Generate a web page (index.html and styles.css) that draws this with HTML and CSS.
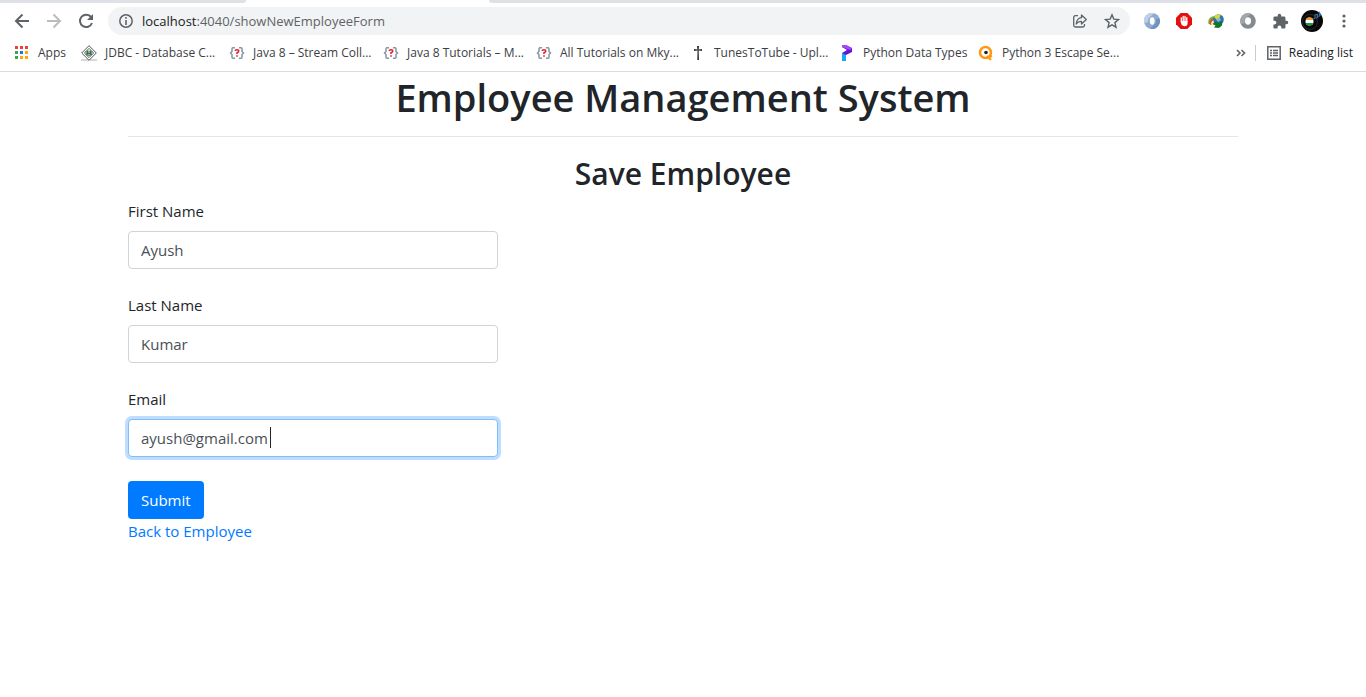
FILE: index.html
```html
<!DOCTYPE html>
<html lang="en">
<head>
<meta charset="utf-8">
<title>Employee Management System</title>
<link rel="stylesheet" href="styles.css">
</head>
<body>
<svg class="defs" aria-hidden="true">
  <defs>
    <symbol id="mkyong" viewBox="0 0 16 14">
      <path d="M6 1.700H4Q3 1.700 3 2.700V5.500L1.500 7 3 8.500v2.800q0 1 1 1H6M10 1.700h2q1 0 1 1V5.500L14.500 7 13 8.500v2.800q0 1-1 1h-2" fill="none" stroke="#8595a3" stroke-width="1.500"/>
      <path d="M6.200 5Q6.200 3.700 8 3.700T9.800 5Q9.800 6.300 8 6.800V8M8 9.200v1.600" fill="none" stroke="#e8202c" stroke-width="1.600"/>
    </symbol>
  </defs>
</svg>
<header class="browser">
  <div class="tabstrip"><span class="tabs-before"></span><span class="tabs-after"></span></div>
  <div class="toolbar">
    <nav class="nav-buttons">
      <button class="icon-button" aria-label="Back"><svg width="16" height="16" viewBox="0 0 16 16" fill="none" stroke="#5f6368" stroke-width="2"><path d="M15 8H2M8.500 1.500 2 8l6.500 6.500"/></svg></button>
      <button class="icon-button" aria-label="Forward"><svg width="16" height="16" viewBox="0 0 16 16" fill="none" stroke="#babcbe" stroke-width="2"><path d="M1 8h13M7.500 1.500 14 8l-6.500 6.500"/></svg></button>
      <button class="icon-button" aria-label="Reload"><svg width="16" height="16" viewBox="0 0 16 16"><path d="M13.200 4.200A6.200 6.200 0 1 0 14 10" fill="none" stroke="#5f6368" stroke-width="2"/><path d="M15 1v6H9z" fill="#5f6368"/></svg></button>
    </nav>
    <div class="address">
      <svg width="14" height="14" viewBox="0 0 14 14"><circle cx="7" cy="7" r="6.200" fill="none" stroke="#5f6368" stroke-width="1.500"/><path d="M7 3v1.700M7 6v5" stroke="#5f6368" stroke-width="1.600"/></svg>
      <span class="url"><span class="host">localhost</span>:4040/showNewEmployeeForm</span>
      <button class="icon-button" aria-label="Share"><svg width="16" height="16" viewBox="0 0 16 16" fill="none" stroke="#5f6368" stroke-width="1.300"><path d="M6 2.700H3.500q-1.800 0-1.800 1.800v7.700q0 1.800 1.800 1.800h7.200q1.800 0 1.800-1.800V11"/><path d="M9.500 2v2.700Q5 5 4.200 11 6 8.300 9.500 8.300V11l4.800-4.500z" stroke-linejoin="round"/></svg></button>
      <button class="icon-button" aria-label="Bookmark this page"><svg width="16" height="16" viewBox="0 0 16 16" fill="none" stroke="#5f6368" stroke-width="1.400"><path d="m8 1.800 1.800 4.300 4.700.4-3.600 3.100 1.100 4.600L8 11.800l-4 2.400 1.100-4.600-3.600-3.100 4.700-.4z"/></svg></button>
    </div>
    <div class="extensions">
      <button class="icon-button" aria-label="Blue ring extension"><svg width="16" height="16" viewBox="0 0 16 16"><circle cx="8" cy="8" r="8" fill="#8facd0"/><path d="M2 2.500A8 8 0 0 1 10 .3L6 4A5 5 0 0 0 4 9L.3 10A8 8 0 0 1 2 2.500" fill="#bdd0e5"/><path d="M15.500 5.500A8 8 0 0 1 6 15.800L10 12q3-2 2-6z" fill="#6d94bf"/><ellipse cx="8.200" cy="8" rx="2.400" ry="3.700" fill="#fff"/></svg></button>
      <button class="icon-button" aria-label="Ad blocker"><svg width="16" height="16" viewBox="0 0 16 16"><path d="M4.700 0h6.600L16 4.700v6.600L11.300 16H4.700L0 11.300V4.700z" fill="#e60f0f"/><path d="M5.300 9V5M7.200 8V3.500M9 8V3.500M10.800 9V4.700" stroke="#fff" stroke-width="1.300" stroke-linecap="round"/><path d="M4.700 8h6.800v2.500q0 2.800-2.700 2.800-2.500 0-3.500-2z" fill="#fff"/></svg></button>
      <button class="icon-button" aria-label="Download manager"><svg width="16" height="16" viewBox="0 0 16 16"><path d="M.3 10.500Q-.5 3.500 7 3l1 6-5 3z" fill="#68b83f"/><path d="M1.500 11Q1 5 7.500 5l1 4-5 3z" fill="#e9482c"/><path d="M3 11.500Q3 7 8 6.700l1 3-4 2.500z" fill="#fff0a0"/><circle cx="10.500" cy="6.500" r="5.300" fill="#2c72b5"/><path d="M6 4Q7.500 1 10.500 1.200l2 .8-1 3-3 1.500z" fill="#d9d92d"/><path d="m8 6 4-1 1 2-3 2z" fill="#82bbe0"/><path d="m14.500 8-.5 4.500-3 2.500-5-.5 1.500-2-3-1.500 3-2.500 3 1z" fill="#12762b"/></svg></button>
      <button class="icon-button" aria-label="Grey ring extension"><svg width="16" height="16" viewBox="0 0 16 16"><circle cx="8" cy="8" r="7.800" fill="#858990"/><path d="M2 3A8 8 0 0 1 11 .8L7 4Q4 6 5 10L1 11A8 8 0 0 1 2 3" fill="#a2a5ab"/><ellipse cx="8" cy="8" rx="3" ry="3.700" fill="#fff"/></svg></button>
      <button class="icon-button" aria-label="Extensions"><svg width="17" height="17" viewBox="0 0 24 24"><path d="M20.500 11H19V7c0-1.100-.9-2-2-2h-4V3.500a2.500 2.500 0 0 0-5 0V5H4c-1.100 0-2 .9-2 2v3.800h1.500c1.500 0 2.700 1.200 2.700 2.700S5 16.200 3.500 16.200H2V20c0 1.100.9 2 2 2h3.800v-1.500c0-1.500 1.200-2.700 2.700-2.700s2.700 1.200 2.700 2.700V22H17c1.100 0 2-.9 2-2v-4h1.500a2.500 2.500 0 0 0 0-5z" fill="#5f6368"/></svg></button>
      <button class="icon-button" aria-label="Profile"><svg width="22" height="22" viewBox="0 0 22 22"><circle cx="11" cy="11" r="11" fill="#080808"/><circle cx="9" cy="12" r="7.500" fill="none" stroke="#282828"/><circle cx="8.500" cy="11.500" r="4" fill="#fff"/><path d="M4.700 10a4 4 0 0 1 7.600 0z" fill="#f39432"/><path d="M4.700 13a4 4 0 0 0 7.600 0z" fill="#169647"/><path d="M14 8.500V5l2.500-.7V8M18.500 6V3l2 3M12.500 8.500H14M15 8h1.500M17.300 6.300h1.200" fill="none" stroke="#366f9f" stroke-width="1.200"/></svg></button>
      <button class="icon-button" aria-label="Menu"><svg width="16" height="16" viewBox="0 0 16 16" fill="#5f6368"><circle cx="8" cy="3" r="1.600"/><circle cx="8" cy="8" r="1.600"/><circle cx="8" cy="13" r="1.600"/></svg></button>
    </div>
  </div>
  <div class="bookmarks">
    <nav class="bookmark-list">
      <a class="bookmark" href="#"><svg width="16" height="16" viewBox="0 0 16 16"><path d="M1 1h3v3H1zM6 1h3v3H6zM11 1h3v3h-3z" fill="#ea4335"/><path d="M1 6h3v3H1zM1 11h3v3H1z" fill="#34a853"/><path d="M6 6h3v3H6z" fill="#1a73e8"/><path d="M11 6h3v3h-3zM6 11h3v3H6zM11 11h3v3h-3z" fill="#fbab00"/></svg>Apps</a>
      <a class="bookmark" href="#"><svg width="16" height="16" viewBox="0 0 16 16"><path d="M0 15h16" stroke="#d8d8d8" stroke-width="2"/><path d="m8 .7 7.300 7.300L8 15.300.7 8z" fill="#fff" stroke="#555"/><path d="m8 3.300 4.700 4.700L8 12.700 3.300 8z" fill="#dbe5dd" stroke="#777"/><path d="M4.500 7h7M5 8.500q3 3.500 6 0M6.500 5.500v3h3v-3" fill="none" stroke="#36734a" stroke-width="1.200"/></svg>JDBC - Database C...</a>
      <a class="bookmark" href="#"><svg width="16" height="14"><use href="#mkyong"/></svg>Java 8 – Stream Coll...</a>
      <a class="bookmark" href="#"><svg width="16" height="14"><use href="#mkyong"/></svg>Java 8 Tutorials – M...</a>
      <a class="bookmark" href="#"><svg width="16" height="14"><use href="#mkyong"/></svg>All Tutorials on Mky...</a>
      <a class="bookmark" href="#"><svg width="16" height="16" viewBox="0 0 16 16"><path d="M7 1h2l-.3 3.500L12 4v2l-3.300-.4L9 15H7.300l.2-9.400L4 6V4l3.400.5z" fill="#303030"/></svg>TunesToTube - Upl...</a>
      <a class="bookmark" href="#"><svg width="16" height="16" viewBox="0 0 16 16"><path d="M3 0h4l6 3v4L7 10H3V8l5-3-5-3z" fill="#6414dc"/><path d="M3 0h4l6 3-2 2-8-3z" fill="#a34bf3"/><path d="m3 8 4 2v6H3z" fill="#16a8f5"/></svg>Python Data Types</a>
      <a class="bookmark" href="#"><svg width="16" height="16" viewBox="0 0 16 16"><circle cx="7.500" cy="7.500" r="5.500" fill="none" stroke="#ff970f" stroke-width="2.500"/><path d="m9 11 4 4M9 13l5-2" stroke="#ff970f" stroke-width="2"/><circle cx="8" cy="7.500" r="1.800" fill="#222"/></svg>Python 3 Escape Se...</a>
    </nav>
    <button class="icon-button" aria-label="More bookmarks"><svg width="10" height="8" viewBox="0 0 10 8" fill="none" stroke="#5f6368" stroke-width="1.600"><path d="m1 1 3 3-3 3M5.500 1l3 3-3 3"/></svg></button>
    <button class="reading-list"><svg width="14" height="14" viewBox="0 0 14 14" fill="none" stroke="#5f6368"><path d="M.8.8h12.400v12.400H.8z" stroke-width="1.500"/><path d="M3 4.500h2M3 7h2M3 9.500h2M6 4.500h5M6 7h5M6 9.500h5" stroke-width="1.300"/></svg>Reading list</button>
  </div>
</header>
<main class="container">
  <h1 class="title">Employee Management System</h1>
  <hr class="divider">
  <h2 class="subtitle">Save Employee</h2>
  <form class="employee-form">
    <div class="field">
      <label for="first-name">First Name</label>
      <input class="control" id="first-name" type="text" value="Ayush">
    </div>
    <div class="field">
      <label for="last-name">Last Name</label>
      <input class="control" id="last-name" type="text" value="Kumar">
    </div>
    <div class="field">
      <label for="email">Email</label>
      <div class="control-wrap">
        <input class="control active" id="email" type="text" value="ayush@gmail.com">
        <span class="caret"></span>
      </div>
    </div>
    <button class="submit" type="button">Submit</button>
  </form>
  <a class="back-link" href="#">Back to Employee</a>
</main>
</body>
</html>
```

FILE: styles.css
```css
* { box-sizing: border-box; }
body {
  margin: 0;
  background: #fff;
  color: #212529;
  font: 15px/24px "Open Sans", "Noto Sans", sans-serif;
}
button { font: inherit; cursor: pointer; }
a { text-decoration: none; }
svg { display: block; flex: none; }
.defs { position: absolute; width: 0; height: 0; }

.browser { border-bottom: 1px solid #dadce0; }
.tabstrip { display: flex; gap: 243px; height: 3px; }
.tabs-before { width: 246px; border-bottom-right-radius: 4px; background: #dee1e6; }
.tabs-after { flex: 1; border-bottom-left-radius: 4px; background: #dee1e6; }
.toolbar { display: flex; align-items: center; padding: 4px 14px 0 14px; }
.icon-button {
  display: flex;
  align-items: center;
  justify-content: center;
  padding: 0;
  border: 0;
  background: none;
}
.nav-buttons { display: flex; gap: 16px; margin-right: 14px; }
.address {
  display: flex;
  flex: 1;
  align-items: center;
  gap: 16px;
  height: 28px;
  padding: 0 10px 0 11px;
  border-radius: 14px;
  background: #f1f3f4;
}
.url { flex: 1; margin-left: -7px; color: #5f6368; font-size: 13px; }
.host { color: #202124; }
.extensions { display: flex; align-items: center; gap: 16px; margin-left: 14px; }
.extensions .icon-button { width: 16px; }

.bookmarks {
  display: flex;
  align-items: center;
  height: 36px;
  padding: 0 13px 0 14px;
  color: #3c4043;
  font-size: 12px;
}
.bookmark-list {
  display: grid;
  flex: 1;
  grid-template-columns: 67px 148px 154px 153px 154px 149px 139px auto;
}
.bookmark { display: flex; align-items: center; gap: 8px; color: inherit; white-space: nowrap; }
.reading-list {
  display: flex;
  align-items: center;
  gap: 8px;
  height: 16px;
  margin-left: 9px;
  padding: 0 0 0 11px;
  border: 0;
  border-left: 1px solid #c9cbce;
  background: none;
  color: #202124;
}

.container { max-width: 1140px; margin: 0 auto; padding: 0 15px; }
.title, .subtitle { margin: 0; font-weight: 600; text-align: center; }
.title { font-size: 38px; line-height: 50px; }
.divider { margin: 14px 0 16px; border: 0; border-top: 1px solid #e5e5e5; }
.subtitle { margin-bottom: 4px; font-size: 30px; line-height: 42px; }
.field { width: 33.3333%; margin-bottom: 24px; }
.field label { display: block; margin-bottom: 8px; }
.control-wrap { position: relative; }
.control {
  display: block;
  width: 100%;
  height: 38px;
  padding: 6px 12px;
  border: 1px solid #ced4da;
  border-radius: 4px;
  outline: 0;
  background: #fff;
  color: #495057;
  font: inherit;
}
.control.active { border-color: #80bdff; box-shadow: 0 0 0 3px #bfdeff; }
.caret { position: absolute; top: 8px; left: 142px; width: 1px; height: 21px; background: #212529; }
.submit {
  display: block;
  height: 38px;
  padding: 0 13px;
  border: 0;
  border-radius: 4px;
  background: #007bff;
  color: #fff;
}
.back-link { color: #007bff; }
```
